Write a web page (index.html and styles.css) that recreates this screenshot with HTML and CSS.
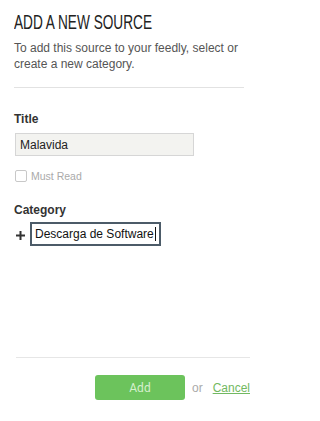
FILE: index.html
```html
<!DOCTYPE html>
<html>
<head>
<meta charset="utf-8">
<link rel="stylesheet" href="styles.css">
</head>
<body>
<div class="panel">
  <h1 class="heading"><span class="heading-text">ADD A NEW SOURCE</span></h1>
  <p class="desc">To add this source to your feedly, select or create a new category.</p>
  <div class="rule"></div>
  <div class="label label-title">Title</div>
  <div class="text-input">Malavida</div>
  <div class="check"><span class="box"></span><span class="check-text">Must Read</span></div>
  <div class="label label-cat">Category</div>
  <div class="cat-row">
    <svg class="plus" width="9" height="9" viewBox="0 0 9 9"><path d="M4.5 0V9M0 4.5H9" stroke="#333" stroke-width="2"/></svg>
    <div class="cat-input">Descarga de Software<span class="caret"></span></div>
  </div>
</div>
<div class="footer">
  <div class="rule rule-footer"></div>
  <div class="actions">
    <div class="btn">Add</div>
    <span class="or">or</span>
    <a class="cancel" href="#">Cancel</a>
  </div>
</div>
</body>
</html>
```
FILE: styles.css
```css
html, body {
  margin: 0;
  padding: 0;
  background: #fff;
}
body {
  font-family: "Liberation Sans", Arial, sans-serif;
  color: #333;
  width: 256px;
  height: 421px;
  overflow: hidden;
}
.panel {
  padding: 11px 12px 0 14px;
}
.heading {
  margin: 0;
  font-weight: normal;
  font-size: 19.5px;
  line-height: 22px;
  height: 22px;
  color: #222;
  white-space: nowrap;
}
.heading-text {
  display: inline-block;
  transform: scaleX(0.7);
  transform-origin: 0 0;
}
.desc {
  margin: 7px 0 0;
  font-size: 12px;
  line-height: 16px;
  color: #555;
}
.rule {
  height: 1px;
  background: #e2e2e2;
  margin-top: 15px;
}
.label {
  font-size: 12px;
  font-weight: bold;
  line-height: 14px;
  color: #333;
}
.label-title {
  margin-top: 24px;
}
.text-input {
  margin: 7px 0 0 1px;
  width: 173px;
  height: 21px;
  border: 1px solid #d6d6d6;
  background: #f3f3f0;
  font-size: 12px;
  line-height: 22px;
  padding-left: 4px;
  box-sizing: content-box;
  color: #222;
}
.check {
  display: flex;
  align-items: center;
  margin: 14px 0 0 1px;
  height: 12px;
}
.box {
  width: 10px;
  height: 10px;
  border: 1px solid #c8c8c8;
  border-radius: 2px;
  background: #fff;
}
.check-text {
  margin-left: 4px;
  font-size: 10.5px;
  color: #aaa;
}
.label-cat {
  margin-top: 21px;
}
.cat-row {
  display: flex;
  align-items: center;
  margin-top: 5px;
}
.plus {
  margin-left: 2px;
  margin-top: 2px;
}
.cat-input {
  margin-left: 5px;
  width: 124px;
  height: 20px;
  border: 2px solid #4c5b68;
  background: #fff;
  font-size: 12px;
  line-height: 21px;
  padding-left: 3px;
  color: #111;
  white-space: nowrap;
  display: flex;
  align-items: center;
}
.caret {
  display: inline-block;
  width: 1px;
  height: 14px;
  background: #111;
  margin-left: 1px;
}
.footer {
  margin: 111px 6px 0 16px;
}
.rule-footer {
  margin-top: 0;
  background: #e6e6e6;
}
.actions {
  display: flex;
  justify-content: flex-end;
  align-items: center;
  margin-top: 17px;
}
.btn {
  width: 90px;
  height: 25px;
  border-radius: 3px;
  background: #6cc35c;
  color: #d6f0cf;
  font-family: Roboto, "Liberation Sans", sans-serif;
  font-size: 12px;
  line-height: 26px;
  text-align: center;
}
.or {
  margin-left: 7px;
  font-size: 12px;
  color: #aaa;
}
.cancel {
  margin-left: 10px;
  font-size: 12px;
  color: #72b961;
  text-decoration: underline;
}
```
